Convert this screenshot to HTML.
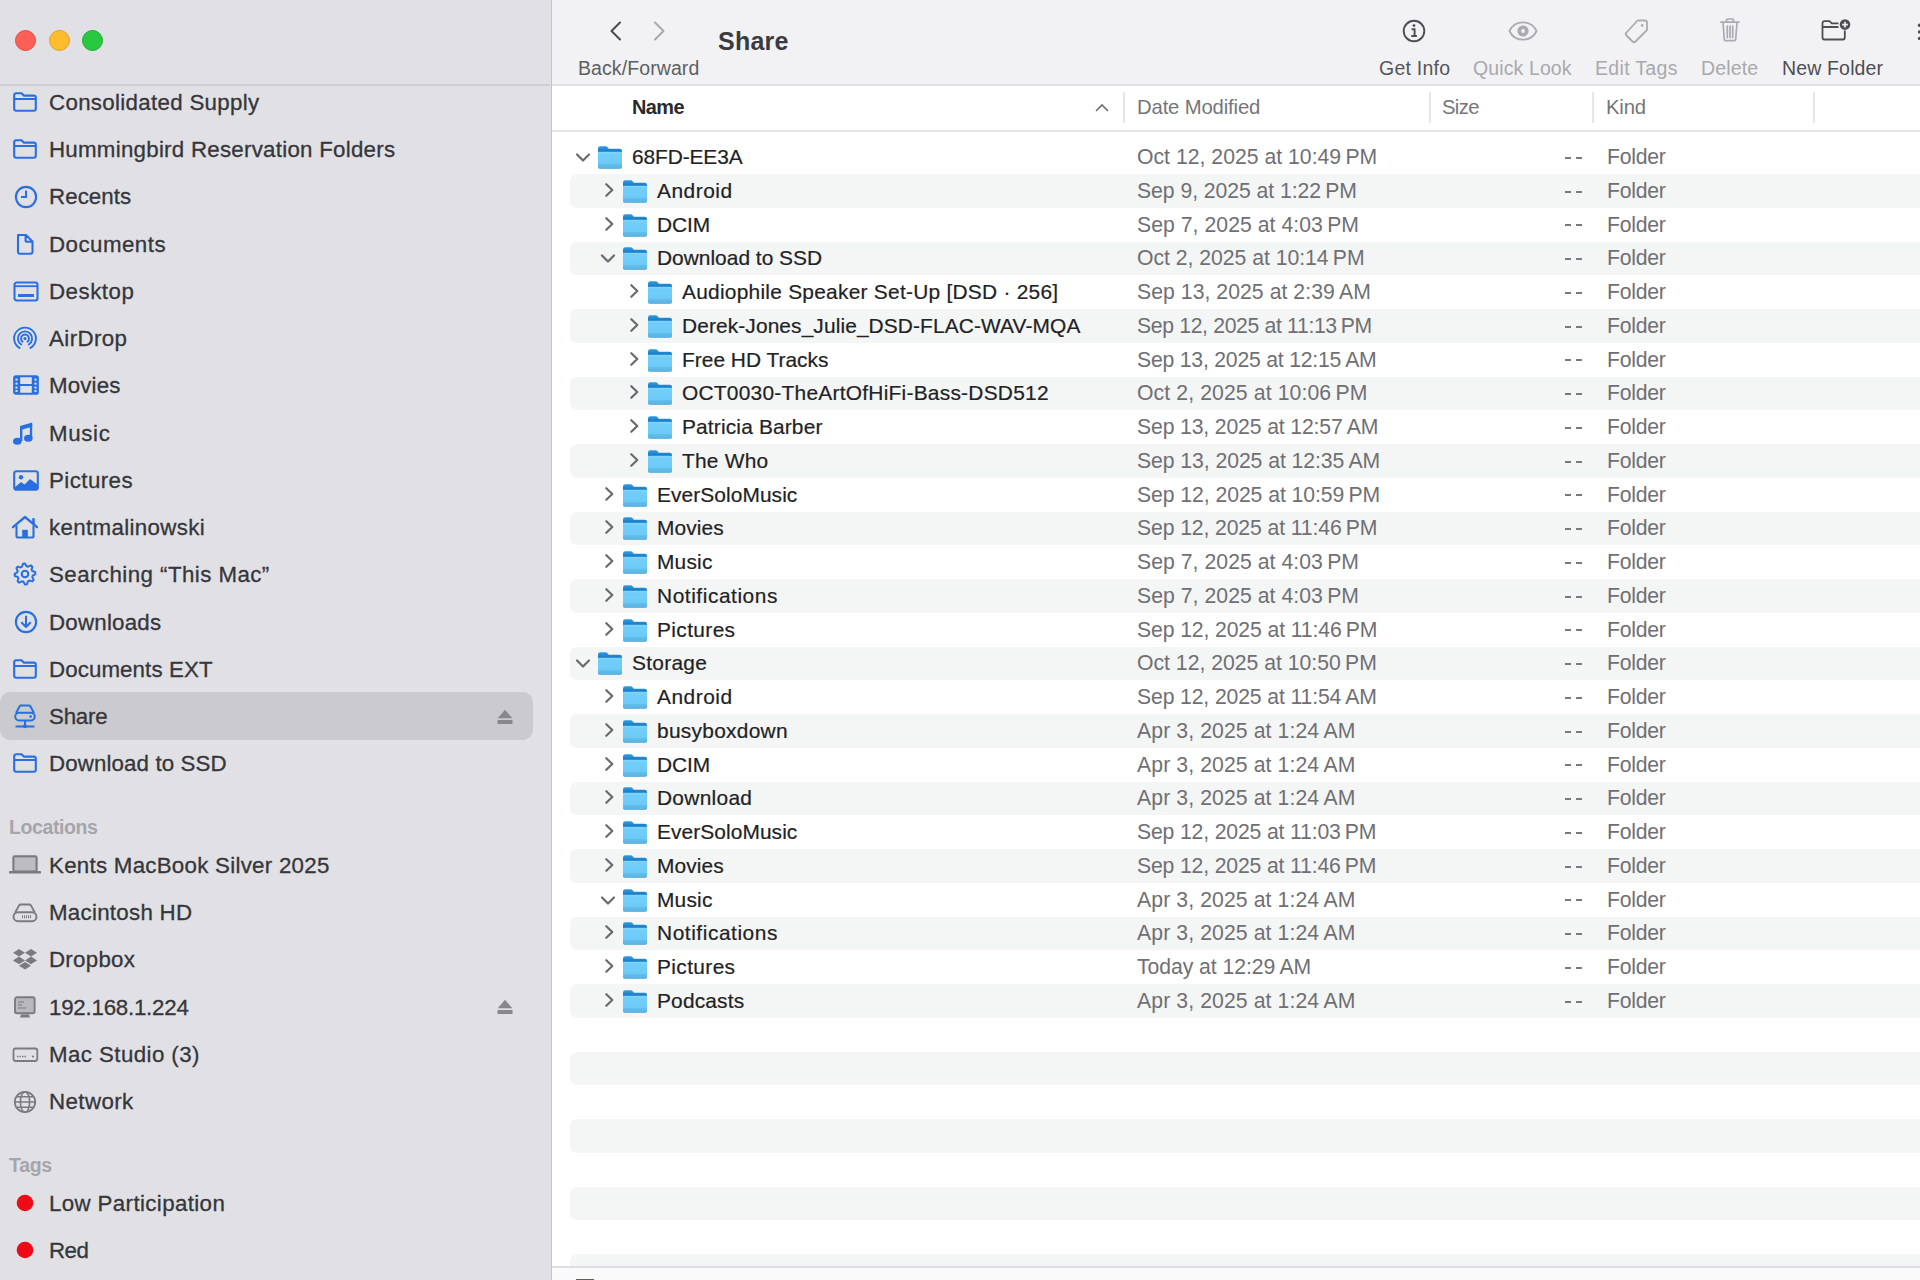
<!DOCTYPE html><html><head><meta charset="utf-8"><style>
*{margin:0;padding:0;box-sizing:border-box}
html,body{width:1920px;height:1280px;overflow:hidden;background:#fff;font-family:"Liberation Sans",sans-serif}
#sb{position:absolute;left:0;top:0;width:552px;height:1280px;background:#E1E1E5;border-right:1px solid #C4C4C8}
.tl{position:absolute;top:30px;width:21px;height:21px;border-radius:50%;border:0.5px solid}
#sbline{position:absolute;left:0;top:84px;width:550px;height:2px;background:#CFCFD3}
#sel{position:absolute;left:0;top:692px;width:533px;height:48px;border-radius:10px;background:#CBCBCF}
.si{position:absolute;left:49px;height:28px;line-height:28px;font-size:22.3px;color:#36363A;white-space:nowrap;-webkit-text-stroke:0.3px #36363A}
.sh{position:absolute;left:9px;height:28px;line-height:28px;font-size:19.5px;font-weight:bold;color:#A5A5AA;white-space:nowrap}
#tb{position:absolute;left:552px;top:0;width:1368px;height:84px;background:#F2F2F5}
#tb svg{margin-left:-552px}
#title{position:absolute;left:166px;top:26.5px;font-size:25px;font-weight:bold;color:#3B3B3F;white-space:nowrap}
.tlab{position:absolute;top:56px;margin-left:-552px;font-size:19.5px;white-space:nowrap;line-height:24px}
#tbline{position:absolute;left:552px;top:84px;width:1368px;height:2px;background:#E1E1E5}
#hdr{position:absolute;left:552px;top:86px;width:1368px;height:44px;background:#fff}
#hdr svg,#hdr div{margin-left:-552px}
.hn{position:absolute;left:632px;top:9px;font-size:19.9px;font-weight:bold;color:#2A2A2C;line-height:24px}
.hc{position:absolute;top:9px;font-size:20.3px;color:#75757A;line-height:24px}
.csep{position:absolute;top:6px;width:2px;height:31px;background:#E6E6E9}
#hdrline{position:absolute;left:552px;top:130px;width:1368px;height:2px;background:#E6E6E9}
#list{position:absolute;left:0;top:0;width:1920px;height:1267px;overflow:hidden;pointer-events:none}
.stripe{position:absolute;left:570px;width:1360px;height:33.4px;border-radius:7px;background:#F4F5F5}
.rn{position:absolute;font-size:20.9px;color:#222224;white-space:nowrap;line-height:26px;-webkit-text-stroke:0.2px #222224}
.rd{position:absolute;left:1137px;font-size:21.2px;color:#6F6F74;white-space:nowrap;line-height:26px}
.rs{position:absolute;left:1565px;width:6px;height:2.2px;background:#78787D;box-shadow:11px 0 0 #78787D}
.rk{position:absolute;left:1607px;font-size:21.2px;color:#6F6F74;white-space:nowrap;line-height:26px;letter-spacing:-0.25px}
#bot{position:absolute;left:552px;top:1266px;width:1368px;height:14px;background:#FAFAFA}
#bot div{margin-left:-552px}
#botline{position:absolute;left:552px;top:0;width:1368px;height:2px;background:#DEDEE0}
</style></head><body><div id="sb">
<div class="tl" style="left:15px;background:#FF5F57;border-color:#E5473F"></div>
<div class="tl" style="left:49px;background:#FEBC2E;border-color:#E0A024"></div>
<div class="tl" style="left:82px;background:#28C840;border-color:#1FAA33"></div>
<div id="sbline"></div>
<div id="sel"></div>
<svg style="position:absolute;left:12px;top:91px" width="26" height="22" viewBox="0 0 26 22"><path d="M2.2 4.2 Q2.2 2.2 4.2 2.2 H9.5 L11.8 4.6 H21.8 Q23.8 4.6 23.8 6.6 V17.8 Q23.8 19.8 21.8 19.8 H4.2 Q2.2 19.8 2.2 17.8 Z M2.2 8 H23.8" fill="none" stroke="#2A6FE0" stroke-width="2.1" stroke-linejoin="round"/></svg>
<div class="si" style="top:88.8px;letter-spacing:0.312px">Consolidated Supply</div>
<svg style="position:absolute;left:12px;top:138px" width="26" height="22" viewBox="0 0 26 22"><path d="M2.2 4.2 Q2.2 2.2 4.2 2.2 H9.5 L11.8 4.6 H21.8 Q23.8 4.6 23.8 6.6 V17.8 Q23.8 19.8 21.8 19.8 H4.2 Q2.2 19.8 2.2 17.8 Z M2.2 8 H23.8" fill="none" stroke="#2A6FE0" stroke-width="2.1" stroke-linejoin="round"/></svg>
<div class="si" style="top:135.8px;letter-spacing:0.260px">Hummingbird Reservation Folders</div>
<svg style="position:absolute;left:13.5px;top:185px" width="24" height="24" viewBox="0 0 24 24"><circle cx="12" cy="12" r="10.1" fill="none" stroke="#2A6FE0" stroke-width="2.1"/><path d="M12 5.5 V12 H7" fill="none" stroke="#2A6FE0" stroke-width="2"/></svg>
<div class="si" style="top:182.8px;letter-spacing:0.066px">Recents</div>
<svg style="position:absolute;left:13px;top:232px" width="24" height="24" viewBox="0 0 24 24"><path d="M5 3 H13 L19.5 9.5 V19.8 Q19.5 21.8 17.5 21.8 H7 Q5 21.8 5 19.8 V5 Q5 3 7 3 Z M12.6 3 V8.2 Q12.6 9.8 14.2 9.8 H19.5" fill="none" stroke="#2A6FE0" stroke-width="2.1" stroke-linejoin="round"/></svg>
<div class="si" style="top:230.8px;letter-spacing:0.473px">Documents</div>
<svg style="position:absolute;left:12.5px;top:281px" width="26" height="22" viewBox="0 0 26 22"><rect x="1.5" y="1.5" width="23" height="18" rx="2.2" fill="none" stroke="#2A6FE0" stroke-width="2.1"/><path d="M1.5 5.2 H24.5" stroke="#2A6FE0" stroke-width="1.8"/><rect x="5" y="13" width="16" height="3" fill="#2A6FE0"/></svg>
<div class="si" style="top:277.8px;letter-spacing:0.500px">Desktop</div>
<svg style="position:absolute;left:12.1px;top:325.75px" width="26" height="25" viewBox="0 0 26 25"><path d="M7.55 21.94 A10.9 10.9 0 1 1 18.45 21.94" fill="none" stroke="#2A6FE0" stroke-width="1.9" stroke-linecap="round"/><path d="M9.24 18.52 A7.1 7.1 0 1 1 16.76 18.52" fill="none" stroke="#2A6FE0" stroke-width="1.9" stroke-linecap="round"/><path d="M10.54 15.65 A4.0 4.0 0 1 1 15.46 15.65" fill="none" stroke="#2A6FE0" stroke-width="1.9" stroke-linecap="round"/><circle cx="13" cy="12.5" r="1.6" fill="#2A6FE0"/></svg>
<div class="si" style="top:324.8px;letter-spacing:0.401px">AirDrop</div>
<svg style="position:absolute;left:12.5px;top:375px" width="26" height="20" viewBox="0 0 26 20"><rect x="1.2" y="1.2" width="23.6" height="17.6" rx="1.6" fill="none" stroke="#2A6FE0" stroke-width="2.1"/><path d="M6.2 1.5 V18.5 M19.8 1.5 V18.5 M6.2 10 H19.8" stroke="#2A6FE0" stroke-width="2"/><g fill="#2A6FE0"><rect x="1" y="1" width="5" height="18"/><rect x="20" y="1" width="5" height="18"/></g><g fill="#E3E3E6"><rect x="2.5" y="3.6" width="2" height="2"/><rect x="2.5" y="7.6" width="2" height="2"/><rect x="2.5" y="11.6" width="2" height="2"/><rect x="2.5" y="15" width="2" height="2"/><rect x="21.5" y="3.6" width="2" height="2"/><rect x="21.5" y="7.6" width="2" height="2"/><rect x="21.5" y="11.6" width="2" height="2"/><rect x="21.5" y="15" width="2" height="2"/></g></svg>
<div class="si" style="top:371.8px;letter-spacing:0.160px">Movies</div>
<svg style="position:absolute;left:11.5px;top:421px" width="22" height="25" viewBox="0 0 22 25"><path d="M8 5 L20.2 1.6 V5.8 L10.4 8.6 V20 H8 Z" fill="#2A6FE0"/><path d="M17.8 3 H20.2 V17 H17.8 Z" fill="#2A6FE0"/><ellipse cx="5.3" cy="20.3" rx="4.3" ry="3.5" fill="#2A6FE0"/><ellipse cx="16.3" cy="17.3" rx="4.3" ry="3.5" fill="#2A6FE0"/></svg>
<div class="si" style="top:419.8px;letter-spacing:0.650px">Music</div>
<svg style="position:absolute;left:12.5px;top:470px" width="26" height="21" viewBox="0 0 26 21"><rect x="1.2" y="1.2" width="23.6" height="18.6" rx="2.2" fill="none" stroke="#2A6FE0" stroke-width="2.1"/><circle cx="8" cy="7.2" r="2.2" fill="#2A6FE0"/><path d="M1.5 17.5 L8 12 L11.5 14.5 L17 9 L24.5 14.5 V18 Q24.5 19.8 22.5 19.8 H3.5 Q1.5 19.8 1.5 18 Z" fill="#2A6FE0"/></svg>
<div class="si" style="top:466.8px;letter-spacing:0.429px">Pictures</div>
<svg style="position:absolute;left:10.5px;top:515px" width="28" height="24" viewBox="0 0 28 24"><path d="M2 12.2 L14 2 L26 12.2" fill="none" stroke="#2A6FE0" stroke-width="2.3" stroke-linecap="round" stroke-linejoin="round"/><path d="M5.5 10.5 V21.5 Q5.5 22.5 6.5 22.5 H21.5 Q22.5 22.5 22.5 21.5 V10.5" fill="none" stroke="#2A6FE0" stroke-width="2.1"/><rect x="21.2" y="3.2" width="2.6" height="6.8" fill="#2A6FE0"/><rect x="11.2" y="14.8" width="5.6" height="7.8" fill="#2A6FE0"/></svg>
<div class="si" style="top:513.8px;letter-spacing:0.353px">kentmalinowski</div>
<svg style="position:absolute;left:13px;top:562px" width="24" height="24" viewBox="0 0 24 24"><polygon points="12.00,1.60 14.03,1.80 15.02,4.70 16.39,5.43 19.35,4.65 20.65,6.22 19.30,8.98 19.75,10.46 22.40,12.00 22.20,14.03 19.30,15.02 18.57,16.39 19.35,19.35 17.78,20.65 15.02,19.30 13.54,19.75 12.00,22.40 9.97,22.20 8.98,19.30 7.61,18.57 4.65,19.35 3.35,17.78 4.70,15.02 4.25,13.54 1.60,12.00 1.80,9.97 4.70,8.98 5.43,7.61 4.65,4.65 6.22,3.35 8.98,4.70 10.46,4.25" fill="none" stroke="#2A6FE0" stroke-width="2" stroke-linejoin="round" transform="rotate(-11 12 12)"/><circle cx="12" cy="12" r="3.3" fill="none" stroke="#2A6FE0" stroke-width="2.1"/></svg>
<div class="si" style="top:560.8px;letter-spacing:0.442px">Searching “This Mac”</div>
<svg style="position:absolute;left:13.5px;top:610px" width="24" height="24" viewBox="0 0 24 24"><circle cx="12" cy="12" r="10.1" fill="none" stroke="#2A6FE0" stroke-width="2.1"/><path d="M12 6.5 V17 M7.8 12.8 L12 17 L16.2 12.8" fill="none" stroke="#2A6FE0" stroke-width="2" stroke-linecap="round" stroke-linejoin="round"/></svg>
<div class="si" style="top:608.8px;letter-spacing:0.223px">Downloads</div>
<svg style="position:absolute;left:12px;top:658px" width="26" height="22" viewBox="0 0 26 22"><path d="M2.2 4.2 Q2.2 2.2 4.2 2.2 H9.5 L11.8 4.6 H21.8 Q23.8 4.6 23.8 6.6 V17.8 Q23.8 19.8 21.8 19.8 H4.2 Q2.2 19.8 2.2 17.8 Z M2.2 8 H23.8" fill="none" stroke="#2A6FE0" stroke-width="2.1" stroke-linejoin="round"/></svg>
<div class="si" style="top:655.8px;letter-spacing:0.099px">Documents EXT</div>
<svg style="position:absolute;left:13px;top:704px" width="24" height="25" viewBox="0 0 24 25"><path d="M3 9 L6.5 2.5 Q7 1.6 8 1.6 H16 Q17 1.6 17.5 2.5 L21 9" fill="none" stroke="#2A6FE0" stroke-width="2"/><rect x="2.2" y="8.8" width="19.6" height="7.6" rx="3.8" fill="none" stroke="#2A6FE0" stroke-width="2"/><circle cx="17.6" cy="12.6" r="1.3" fill="#2A6FE0"/><path d="M12 16.4 V22 M2.5 22.4 H21.5" stroke="#2A6FE0" stroke-width="2"/><circle cx="12" cy="22.3" r="2" fill="#2A6FE0"/></svg>
<div class="si" style="top:702.8px;letter-spacing:-0.200px">Share</div>
<svg style="position:absolute;left:12px;top:752px" width="26" height="22" viewBox="0 0 26 22"><path d="M2.2 4.2 Q2.2 2.2 4.2 2.2 H9.5 L11.8 4.6 H21.8 Q23.8 4.6 23.8 6.6 V17.8 Q23.8 19.8 21.8 19.8 H4.2 Q2.2 19.8 2.2 17.8 Z M2.2 8 H23.8" fill="none" stroke="#2A6FE0" stroke-width="2.1" stroke-linejoin="round"/></svg>
<div class="si" style="top:749.8px;letter-spacing:0.115px">Download to SSD</div>
<svg style="position:absolute;left:8.5px;top:855px" width="32" height="20" viewBox="0 0 32 20"><rect x="4.2" y="1.2" width="23.6" height="15.4" rx="1.5" fill="#A2A2A6" stroke="#7A7A7F" stroke-width="1.7"/><rect x="6" y="3" width="20" height="12" fill="#BDBDC1"/><path d="M1 17.3 H31" stroke="#7A7A7F" stroke-width="2.6" stroke-linecap="round"/></svg>
<div class="si" style="top:851.8px;letter-spacing:0.266px">Kents MacBook Silver 2025</div>
<svg style="position:absolute;left:11.5px;top:903px" width="26" height="20" viewBox="0 0 26 20"><path d="M3.2 9.5 L7 2.5 Q7.6 1.5 8.6 1.5 H17.4 Q18.4 1.5 19 2.5 L22.8 9.5" fill="none" stroke="#7A7A7F" stroke-width="1.8"/><rect x="1.5" y="9.2" width="23" height="9" rx="4.5" fill="none" stroke="#7A7A7F" stroke-width="1.9"/><path d="M10 13.8 H20" stroke="#7A7A7F" stroke-width="3" stroke-dasharray="1 1"/></svg>
<div class="si" style="top:898.8px;letter-spacing:0.273px">Macintosh HD</div>
<svg style="position:absolute;left:11.5px;top:948px" width="26" height="22" viewBox="0 0 26 22"><g fill="#7A7A7F"><path d="M7 1 L13 4.8 L7 8.6 L1 4.8 Z"/><path d="M19 1 L25 4.8 L19 8.6 L13 4.8 Z"/><path d="M7 8.6 L13 12.4 L7 16.2 L1 12.4 Z"/><path d="M19 8.6 L25 12.4 L19 16.2 L13 12.4 Z"/><path d="M13 14 L19 17.8 L13 21.4 L7 17.8 Z"/></g></svg>
<div class="si" style="top:945.8px;letter-spacing:0.266px">Dropbox</div>
<svg style="position:absolute;left:12.5px;top:996px" width="24" height="23" viewBox="0 0 24 23"><rect x="2" y="1.3" width="19.6" height="16" rx="2" fill="#B9B9BD" stroke="#7A7A7F" stroke-width="1.9"/><path d="M5 6 H11 M5 9 H9 M5 12 H13" stroke="#7A7A7F" stroke-width="1.2"/><path d="M8 18.5 L7 21.5 H17 L16 18.5" fill="#7A7A7F"/></svg>
<div class="si" style="top:993.8px;letter-spacing:-0.233px">192.168.1.224</div>
<svg style="position:absolute;left:11.5px;top:1046.5px" width="28" height="16" viewBox="0 0 28 16"><rect x="1.5" y="1.5" width="23.8" height="12.5" rx="2.2" fill="none" stroke="#7A7A7F" stroke-width="1.8"/><path d="M5 9.5 H14" stroke="#7A7A7F" stroke-width="1.3" stroke-dasharray="1.5 1"/><circle cx="21" cy="9.5" r="1.1" fill="#7A7A7F"/></svg>
<div class="si" style="top:1040.8px;letter-spacing:0.416px">Mac Studio (3)</div>
<svg style="position:absolute;left:13px;top:1090px" width="24" height="24" viewBox="0 0 24 24"><circle cx="12" cy="12" r="10.2" fill="none" stroke="#7A7A7F" stroke-width="1.8"/><ellipse cx="12" cy="12" rx="4.6" ry="10.2" fill="none" stroke="#7A7A7F" stroke-width="1.6"/><path d="M2 12 H22 M3.5 6.8 H20.5 M3.5 17.2 H20.5" stroke="#7A7A7F" stroke-width="1.6"/></svg>
<div class="si" style="top:1087.8px;letter-spacing:0.400px">Network</div>
<svg style="position:absolute;left:16px;top:1194px" width="18" height="18" viewBox="0 0 18 18"><circle cx="9" cy="9" r="8.3" fill="#EC0B16"/></svg>
<div class="si" style="top:1189.8px;letter-spacing:0.375px">Low Participation</div>
<svg style="position:absolute;left:16px;top:1241px" width="18" height="18" viewBox="0 0 18 18"><circle cx="9" cy="9" r="8.3" fill="#EC0B16"/></svg>
<div class="si" style="top:1236.8px;letter-spacing:-0.500px">Red</div>
<div class="sh" style="top:813px;letter-spacing:-0.398px">Locations</div>
<div class="sh" style="top:1151px;letter-spacing:-0.334px">Tags</div>
<svg style="position:absolute;left:496px;top:708px" width="18" height="18" viewBox="0 0 18 18"><path d="M9 1.8 L16.3 10.3 H1.7 Z" fill="#88888C"/><rect x="1.5" y="12" width="15" height="4" rx="0.5" fill="#88888C"/></svg>
<svg style="position:absolute;left:496px;top:998px" width="18" height="18" viewBox="0 0 18 18"><path d="M9 1.8 L16.3 10.3 H1.7 Z" fill="#88888C"/><rect x="1.5" y="12" width="15" height="4" rx="0.5" fill="#88888C"/></svg>
</div>
<div id="tb">
<svg style="position:absolute;left:606.7px;top:20px" width="16" height="22" viewBox="0 0 16 22"><path d="M13 2.5 L4.5 11 L13 19.5" fill="none" stroke="#4A4A4E" stroke-width="2" stroke-linecap="round" stroke-linejoin="round"/></svg>
<svg style="position:absolute;left:651.3px;top:20px" width="16" height="22" viewBox="0 0 16 22"><path d="M4 2.5 L12.5 11 L4 19.5" fill="none" stroke="#A9A9AD" stroke-width="2" stroke-linecap="round" stroke-linejoin="round"/></svg>
<div id="title" style=";letter-spacing:0.250px">Share</div>
<div class="tlab" style="left:578px;color:#5E5E62;letter-spacing:0.091px">Back/Forward</div>
<svg style="position:absolute;left:1402px;top:19px" width="24" height="24" viewBox="0 0 24 24"><circle cx="12" cy="12" r="10.3" fill="none" stroke="#4E4E52" stroke-width="1.9"/><circle cx="12" cy="6.6" r="1.4" fill="#4E4E52"/><path d="M9.6 10.2 H12.6 V16.8 M9.3 17 H14.9" fill="none" stroke="#4E4E52" stroke-width="1.9"/></svg>
<div class="tlab" style="left:1379px;color:#55555A;letter-spacing:0.230px">Get Info</div>
<svg style="position:absolute;left:1508px;top:21px" width="30" height="20" viewBox="0 0 30 20"><path d="M1.4 10 C7 -1.6 23 -1.6 28.6 10 C23 21.6 7 21.6 1.4 10 Z" fill="none" stroke="#ABABAF" stroke-width="1.8"/><circle cx="15" cy="10" r="5.6" fill="#ABABAF"/><circle cx="15" cy="10" r="1.9" fill="#F2F2F5"/></svg>
<div class="tlab" style="left:1473px;color:#A9A9AD;letter-spacing:0.111px">Quick Look</div>
<svg style="position:absolute;left:1623px;top:17px" width="28" height="28" viewBox="0 0 28 28"><path d="M14.5 3.5 H22 Q24 3.5 24 5.5 V13 L12.5 24.5 Q11 26 9.5 24.5 L3.5 18.5 Q2 17 3.5 15.5 Z" fill="none" stroke="#ABABAF" stroke-width="1.8" stroke-linejoin="round" transform="rotate(0 14 14)"/><circle cx="19.2" cy="8.4" r="1.3" fill="#ABABAF"/></svg>
<div class="tlab" style="left:1595px;color:#A9A9AD;letter-spacing:0.325px">Edit Tags</div>
<svg style="position:absolute;left:1718px;top:17px" width="24" height="26" viewBox="0 0 24 26"><path d="M3 5.2 H21 M8.5 5 V3.2 Q8.5 2 9.7 2 H14.3 Q15.5 2 15.5 3.2 V5 M5 5.5 L6.3 22.5 Q6.4 23.6 7.5 23.6 H16.5 Q17.6 23.6 17.7 22.5 L19 5.5 M9.3 9 V20.5 M12 9 V20.5 M14.7 9 V20.5" fill="none" stroke="#ABABAF" stroke-width="1.7" stroke-linecap="round"/></svg>
<div class="tlab" style="left:1701px;color:#A9A9AD;letter-spacing:0.160px">Delete</div>
<svg style="position:absolute;left:1819px;top:16px" width="34" height="26" viewBox="0 0 34 26"><path d="M3.5 7.2 Q3.5 5.2 5.5 5.2 H10.5 L12.8 7.4 H19.5 M3.5 11 H19.5 M3.5 7.2 V21.5 Q3.5 23.5 5.5 23.5 H23.8 Q25.8 23.5 25.8 21.5 V14.5" fill="none" stroke="#4E4E52" stroke-width="1.8" stroke-linejoin="round"/><circle cx="26" cy="8.6" r="5.3" fill="#4E4E52"/><path d="M26 5.8 V11.4 M23.2 8.6 H28.8" stroke="#F2F2F5" stroke-width="1.6"/></svg>
<div class="tlab" style="left:1782px;color:#4E4E52;letter-spacing:0.157px">New Folder</div>
<svg style="position:absolute;left:1910px;top:22px" width="10" height="20" viewBox="0 0 10 20"><circle cx="9.5" cy="3.3" r="1.7" fill="#4E4E52"/><circle cx="9.5" cy="9.9" r="1.7" fill="#4E4E52"/><circle cx="9.5" cy="16.4" r="1.7" fill="#4E4E52"/></svg>
</div>
<div id="tbline"></div>
<div id="hdr">
<div class="hn" style=";letter-spacing:-0.533px">Name</div>
<svg style="position:absolute;left:1094px;top:14px" width="16" height="14" viewBox="0 0 16 14"><path d="M2.5 10.5 L8 5 L13.5 10.5" fill="none" stroke="#707074" stroke-width="1.7" stroke-linecap="round"/></svg>
<div class="csep" style="left:1123px"></div>
<div class="csep" style="left:1429px"></div>
<div class="csep" style="left:1592px"></div>
<div class="csep" style="left:1813px"></div>
<div class="hc" style="left:1137px;letter-spacing:-0.150px">Date Modified</div>
<div class="hc" style="left:1442px;letter-spacing:-0.666px">Size</div>
<div class="hc" style="left:1606px;letter-spacing:-0.199px">Kind</div>
</div>
<div id="hdrline"></div>
<svg width="0" height="0" style="position:absolute"><defs><linearGradient id="fg" x1="0" y1="0" x2="0" y2="1"><stop offset="0" stop-color="#84D7FB"/><stop offset="0.15" stop-color="#72CEF9"/><stop offset="0.7" stop-color="#6DCAF7"/><stop offset="0.75" stop-color="#62BEEC"/><stop offset="1" stop-color="#5AB3E0"/></linearGradient><linearGradient id="fb" x1="0" y1="0" x2="0" y2="1"><stop offset="0" stop-color="#2F9CE2"/><stop offset="0.25" stop-color="#1878C4"/><stop offset="1" stop-color="#1878C4"/></linearGradient></defs></svg>
<div id="list">
<div class="stripe" style="top:174.2px"></div>
<div class="stripe" style="top:241.7px"></div>
<div class="stripe" style="top:309.2px"></div>
<div class="stripe" style="top:376.7px"></div>
<div class="stripe" style="top:444.2px"></div>
<div class="stripe" style="top:511.7px"></div>
<div class="stripe" style="top:579.2px"></div>
<div class="stripe" style="top:646.7px"></div>
<div class="stripe" style="top:714.2px"></div>
<div class="stripe" style="top:781.7px"></div>
<div class="stripe" style="top:849.2px"></div>
<div class="stripe" style="top:916.7px"></div>
<div class="stripe" style="top:984.2px"></div>
<div class="stripe" style="top:1051.7px"></div>
<div class="stripe" style="top:1119.2px"></div>
<div class="stripe" style="top:1186.7px"></div>
<div class="stripe" style="top:1254.2px"></div>
<svg style="position:absolute;left:574px;top:151px" width="18" height="14" viewBox="0 0 18 14"><path d="M3 3.5 L9 9.5 L15 3.5" fill="none" stroke="#6A6A6E" stroke-width="2.2" stroke-linecap="round" stroke-linejoin="round"/></svg>
<svg style="position:absolute;left:597px;top:145px" width="26" height="25" viewBox="0 0 26 25"><path d="M1 3.5 Q1 1.2 3.3 1.2 H8.6 Q9.8 1.2 10.6 2.2 L11.8 3.7 H22.8 Q25 3.7 25 5.9 V21.4 Q25 23.6 22.8 23.6 H3.2 Q1 23.6 1 21.4 Z" fill="url(#fb)"/><path d="M1 7.2 Q1 6.7 1.5 6.7 H24.5 Q25 6.7 25 7.2 V21.4 Q25 23.6 22.8 23.6 H3.2 Q1 23.6 1 21.4 Z" fill="url(#fg)"/></svg>
<div class="rn" style="left:632px;top:144.1px;letter-spacing:-0.100px">68FD-EE3A</div>
<div class="rd" style="top:144.1px;letter-spacing:0.018px">Oct 12, 2025 at 10:49 PM</div>
<div class="rs" style="top:156.8px"></div>
<div class="rk" style="top:144.1px">Folder</div>
<svg style="position:absolute;left:601px;top:181px" width="14" height="18" viewBox="0 0 14 18"><path d="M5.3 3.2 L11.3 9 L5.3 14.8" fill="none" stroke="#6A6A6E" stroke-width="2.2" stroke-linecap="round" stroke-linejoin="round"/></svg>
<svg style="position:absolute;left:622px;top:179px" width="26" height="25" viewBox="0 0 26 25"><path d="M1 3.5 Q1 1.2 3.3 1.2 H8.6 Q9.8 1.2 10.6 2.2 L11.8 3.7 H22.8 Q25 3.7 25 5.9 V21.4 Q25 23.6 22.8 23.6 H3.2 Q1 23.6 1 21.4 Z" fill="url(#fb)"/><path d="M1 7.2 Q1 6.7 1.5 6.7 H24.5 Q25 6.7 25 7.2 V21.4 Q25 23.6 22.8 23.6 H3.2 Q1 23.6 1 21.4 Z" fill="url(#fg)"/></svg>
<div class="rn" style="left:657px;top:177.9px;letter-spacing:0.500px">Android</div>
<div class="rd" style="top:177.9px;letter-spacing:-0.048px">Sep 9, 2025 at 1:22 PM</div>
<div class="rs" style="top:190.6px"></div>
<div class="rk" style="top:177.9px">Folder</div>
<svg style="position:absolute;left:601px;top:215px" width="14" height="18" viewBox="0 0 14 18"><path d="M5.3 3.2 L11.3 9 L5.3 14.8" fill="none" stroke="#6A6A6E" stroke-width="2.2" stroke-linecap="round" stroke-linejoin="round"/></svg>
<svg style="position:absolute;left:622px;top:213px" width="26" height="25" viewBox="0 0 26 25"><path d="M1 3.5 Q1 1.2 3.3 1.2 H8.6 Q9.8 1.2 10.6 2.2 L11.8 3.7 H22.8 Q25 3.7 25 5.9 V21.4 Q25 23.6 22.8 23.6 H3.2 Q1 23.6 1 21.4 Z" fill="url(#fb)"/><path d="M1 7.2 Q1 6.7 1.5 6.7 H24.5 Q25 6.7 25 7.2 V21.4 Q25 23.6 22.8 23.6 H3.2 Q1 23.6 1 21.4 Z" fill="url(#fg)"/></svg>
<div class="rn" style="left:657px;top:211.6px;letter-spacing:-0.067px">DCIM</div>
<div class="rd" style="top:211.6px;letter-spacing:0.048px">Sep 7, 2025 at 4:03 PM</div>
<div class="rs" style="top:224.3px"></div>
<div class="rk" style="top:211.6px">Folder</div>
<svg style="position:absolute;left:599px;top:252px" width="18" height="14" viewBox="0 0 18 14"><path d="M3 3.5 L9 9.5 L15 3.5" fill="none" stroke="#6A6A6E" stroke-width="2.2" stroke-linecap="round" stroke-linejoin="round"/></svg>
<svg style="position:absolute;left:622px;top:246px" width="26" height="25" viewBox="0 0 26 25"><path d="M1 3.5 Q1 1.2 3.3 1.2 H8.6 Q9.8 1.2 10.6 2.2 L11.8 3.7 H22.8 Q25 3.7 25 5.9 V21.4 Q25 23.6 22.8 23.6 H3.2 Q1 23.6 1 21.4 Z" fill="url(#fb)"/><path d="M1 7.2 Q1 6.7 1.5 6.7 H24.5 Q25 6.7 25 7.2 V21.4 Q25 23.6 22.8 23.6 H3.2 Q1 23.6 1 21.4 Z" fill="url(#fg)"/></svg>
<div class="rn" style="left:657px;top:245.4px;letter-spacing:0.014px">Download to SSD</div>
<div class="rd" style="top:245.4px;letter-spacing:-0.020px">Oct 2, 2025 at 10:14 PM</div>
<div class="rs" style="top:258.1px"></div>
<div class="rk" style="top:245.4px">Folder</div>
<svg style="position:absolute;left:626px;top:282px" width="14" height="18" viewBox="0 0 14 18"><path d="M5.3 3.2 L11.3 9 L5.3 14.8" fill="none" stroke="#6A6A6E" stroke-width="2.2" stroke-linecap="round" stroke-linejoin="round"/></svg>
<svg style="position:absolute;left:647px;top:280px" width="26" height="25" viewBox="0 0 26 25"><path d="M1 3.5 Q1 1.2 3.3 1.2 H8.6 Q9.8 1.2 10.6 2.2 L11.8 3.7 H22.8 Q25 3.7 25 5.9 V21.4 Q25 23.6 22.8 23.6 H3.2 Q1 23.6 1 21.4 Z" fill="url(#fb)"/><path d="M1 7.2 Q1 6.7 1.5 6.7 H24.5 Q25 6.7 25 7.2 V21.4 Q25 23.6 22.8 23.6 H3.2 Q1 23.6 1 21.4 Z" fill="url(#fg)"/></svg>
<div class="rn" style="left:682px;top:279.1px;letter-spacing:0.255px">Audiophile Speaker Set-Up [DSD · 256]</div>
<div class="rd" style="top:279.1px;letter-spacing:0.054px">Sep 13, 2025 at 2:39 AM</div>
<div class="rs" style="top:291.8px"></div>
<div class="rk" style="top:279.1px">Folder</div>
<svg style="position:absolute;left:626px;top:316px" width="14" height="18" viewBox="0 0 14 18"><path d="M5.3 3.2 L11.3 9 L5.3 14.8" fill="none" stroke="#6A6A6E" stroke-width="2.2" stroke-linecap="round" stroke-linejoin="round"/></svg>
<svg style="position:absolute;left:647px;top:314px" width="26" height="25" viewBox="0 0 26 25"><path d="M1 3.5 Q1 1.2 3.3 1.2 H8.6 Q9.8 1.2 10.6 2.2 L11.8 3.7 H22.8 Q25 3.7 25 5.9 V21.4 Q25 23.6 22.8 23.6 H3.2 Q1 23.6 1 21.4 Z" fill="url(#fb)"/><path d="M1 7.2 Q1 6.7 1.5 6.7 H24.5 Q25 6.7 25 7.2 V21.4 Q25 23.6 22.8 23.6 H3.2 Q1 23.6 1 21.4 Z" fill="url(#fg)"/></svg>
<div class="rn" style="left:682px;top:312.9px;letter-spacing:0.110px">Derek-Jones_Julie_DSD-FLAC-WAV-MQA</div>
<div class="rd" style="top:312.9px;letter-spacing:-0.340px">Sep 12, 2025 at 11:13 PM</div>
<div class="rs" style="top:325.6px"></div>
<div class="rk" style="top:312.9px">Folder</div>
<svg style="position:absolute;left:626px;top:350px" width="14" height="18" viewBox="0 0 14 18"><path d="M5.3 3.2 L11.3 9 L5.3 14.8" fill="none" stroke="#6A6A6E" stroke-width="2.2" stroke-linecap="round" stroke-linejoin="round"/></svg>
<svg style="position:absolute;left:647px;top:348px" width="26" height="25" viewBox="0 0 26 25"><path d="M1 3.5 Q1 1.2 3.3 1.2 H8.6 Q9.8 1.2 10.6 2.2 L11.8 3.7 H22.8 Q25 3.7 25 5.9 V21.4 Q25 23.6 22.8 23.6 H3.2 Q1 23.6 1 21.4 Z" fill="url(#fb)"/><path d="M1 7.2 Q1 6.7 1.5 6.7 H24.5 Q25 6.7 25 7.2 V21.4 Q25 23.6 22.8 23.6 H3.2 Q1 23.6 1 21.4 Z" fill="url(#fg)"/></svg>
<div class="rn" style="left:682px;top:346.6px;letter-spacing:0.015px">Free HD Tracks</div>
<div class="rd" style="top:346.6px;letter-spacing:-0.209px">Sep 13, 2025 at 12:15 AM</div>
<div class="rs" style="top:359.3px"></div>
<div class="rk" style="top:346.6px">Folder</div>
<svg style="position:absolute;left:626px;top:383px" width="14" height="18" viewBox="0 0 14 18"><path d="M5.3 3.2 L11.3 9 L5.3 14.8" fill="none" stroke="#6A6A6E" stroke-width="2.2" stroke-linecap="round" stroke-linejoin="round"/></svg>
<svg style="position:absolute;left:647px;top:381px" width="26" height="25" viewBox="0 0 26 25"><path d="M1 3.5 Q1 1.2 3.3 1.2 H8.6 Q9.8 1.2 10.6 2.2 L11.8 3.7 H22.8 Q25 3.7 25 5.9 V21.4 Q25 23.6 22.8 23.6 H3.2 Q1 23.6 1 21.4 Z" fill="url(#fb)"/><path d="M1 7.2 Q1 6.7 1.5 6.7 H24.5 Q25 6.7 25 7.2 V21.4 Q25 23.6 22.8 23.6 H3.2 Q1 23.6 1 21.4 Z" fill="url(#fg)"/></svg>
<div class="rn" style="left:682px;top:380.4px;letter-spacing:0.252px">OCT0030-TheArtOfHiFi-Bass-DSD512</div>
<div class="rd" style="top:380.4px;letter-spacing:0.110px">Oct 2, 2025 at 10:06 PM</div>
<div class="rs" style="top:393.1px"></div>
<div class="rk" style="top:380.4px">Folder</div>
<svg style="position:absolute;left:626px;top:417px" width="14" height="18" viewBox="0 0 14 18"><path d="M5.3 3.2 L11.3 9 L5.3 14.8" fill="none" stroke="#6A6A6E" stroke-width="2.2" stroke-linecap="round" stroke-linejoin="round"/></svg>
<svg style="position:absolute;left:647px;top:415px" width="26" height="25" viewBox="0 0 26 25"><path d="M1 3.5 Q1 1.2 3.3 1.2 H8.6 Q9.8 1.2 10.6 2.2 L11.8 3.7 H22.8 Q25 3.7 25 5.9 V21.4 Q25 23.6 22.8 23.6 H3.2 Q1 23.6 1 21.4 Z" fill="url(#fb)"/><path d="M1 7.2 Q1 6.7 1.5 6.7 H24.5 Q25 6.7 25 7.2 V21.4 Q25 23.6 22.8 23.6 H3.2 Q1 23.6 1 21.4 Z" fill="url(#fg)"/></svg>
<div class="rn" style="left:682px;top:414.1px;letter-spacing:0.158px">Patricia Barber</div>
<div class="rd" style="top:414.1px;letter-spacing:-0.139px">Sep 13, 2025 at 12:57 AM</div>
<div class="rs" style="top:426.8px"></div>
<div class="rk" style="top:414.1px">Folder</div>
<svg style="position:absolute;left:626px;top:451px" width="14" height="18" viewBox="0 0 14 18"><path d="M5.3 3.2 L11.3 9 L5.3 14.8" fill="none" stroke="#6A6A6E" stroke-width="2.2" stroke-linecap="round" stroke-linejoin="round"/></svg>
<svg style="position:absolute;left:647px;top:449px" width="26" height="25" viewBox="0 0 26 25"><path d="M1 3.5 Q1 1.2 3.3 1.2 H8.6 Q9.8 1.2 10.6 2.2 L11.8 3.7 H22.8 Q25 3.7 25 5.9 V21.4 Q25 23.6 22.8 23.6 H3.2 Q1 23.6 1 21.4 Z" fill="url(#fb)"/><path d="M1 7.2 Q1 6.7 1.5 6.7 H24.5 Q25 6.7 25 7.2 V21.4 Q25 23.6 22.8 23.6 H3.2 Q1 23.6 1 21.4 Z" fill="url(#fg)"/></svg>
<div class="rn" style="left:682px;top:447.9px;letter-spacing:0.234px">The Who</div>
<div class="rd" style="top:447.9px;letter-spacing:-0.060px">Sep 13, 2025 at 12:35 AM</div>
<div class="rs" style="top:460.6px"></div>
<div class="rk" style="top:447.9px">Folder</div>
<svg style="position:absolute;left:601px;top:485px" width="14" height="18" viewBox="0 0 14 18"><path d="M5.3 3.2 L11.3 9 L5.3 14.8" fill="none" stroke="#6A6A6E" stroke-width="2.2" stroke-linecap="round" stroke-linejoin="round"/></svg>
<svg style="position:absolute;left:622px;top:483px" width="26" height="25" viewBox="0 0 26 25"><path d="M1 3.5 Q1 1.2 3.3 1.2 H8.6 Q9.8 1.2 10.6 2.2 L11.8 3.7 H22.8 Q25 3.7 25 5.9 V21.4 Q25 23.6 22.8 23.6 H3.2 Q1 23.6 1 21.4 Z" fill="url(#fb)"/><path d="M1 7.2 Q1 6.7 1.5 6.7 H24.5 Q25 6.7 25 7.2 V21.4 Q25 23.6 22.8 23.6 H3.2 Q1 23.6 1 21.4 Z" fill="url(#fg)"/></svg>
<div class="rn" style="left:657px;top:481.6px;letter-spacing:0.083px">EverSoloMusic</div>
<div class="rd" style="top:481.6px;letter-spacing:-0.060px">Sep 12, 2025 at 10:59 PM</div>
<div class="rs" style="top:494.3px"></div>
<div class="rk" style="top:481.6px">Folder</div>
<svg style="position:absolute;left:601px;top:518px" width="14" height="18" viewBox="0 0 14 18"><path d="M5.3 3.2 L11.3 9 L5.3 14.8" fill="none" stroke="#6A6A6E" stroke-width="2.2" stroke-linecap="round" stroke-linejoin="round"/></svg>
<svg style="position:absolute;left:622px;top:516px" width="26" height="25" viewBox="0 0 26 25"><path d="M1 3.5 Q1 1.2 3.3 1.2 H8.6 Q9.8 1.2 10.6 2.2 L11.8 3.7 H22.8 Q25 3.7 25 5.9 V21.4 Q25 23.6 22.8 23.6 H3.2 Q1 23.6 1 21.4 Z" fill="url(#fb)"/><path d="M1 7.2 Q1 6.7 1.5 6.7 H24.5 Q25 6.7 25 7.2 V21.4 Q25 23.6 22.8 23.6 H3.2 Q1 23.6 1 21.4 Z" fill="url(#fg)"/></svg>
<div class="rn" style="left:657px;top:515.4px;letter-spacing:0.120px">Movies</div>
<div class="rd" style="top:515.4px;letter-spacing:-0.112px">Sep 12, 2025 at 11:46 PM</div>
<div class="rs" style="top:528.1px"></div>
<div class="rk" style="top:515.4px">Folder</div>
<svg style="position:absolute;left:601px;top:552px" width="14" height="18" viewBox="0 0 14 18"><path d="M5.3 3.2 L11.3 9 L5.3 14.8" fill="none" stroke="#6A6A6E" stroke-width="2.2" stroke-linecap="round" stroke-linejoin="round"/></svg>
<svg style="position:absolute;left:622px;top:550px" width="26" height="25" viewBox="0 0 26 25"><path d="M1 3.5 Q1 1.2 3.3 1.2 H8.6 Q9.8 1.2 10.6 2.2 L11.8 3.7 H22.8 Q25 3.7 25 5.9 V21.4 Q25 23.6 22.8 23.6 H3.2 Q1 23.6 1 21.4 Z" fill="url(#fb)"/><path d="M1 7.2 Q1 6.7 1.5 6.7 H24.5 Q25 6.7 25 7.2 V21.4 Q25 23.6 22.8 23.6 H3.2 Q1 23.6 1 21.4 Z" fill="url(#fg)"/></svg>
<div class="rn" style="left:657px;top:549.1px;letter-spacing:0.200px">Music</div>
<div class="rd" style="top:549.1px;letter-spacing:0.048px">Sep 7, 2025 at 4:03 PM</div>
<div class="rs" style="top:561.8px"></div>
<div class="rk" style="top:549.1px">Folder</div>
<svg style="position:absolute;left:601px;top:586px" width="14" height="18" viewBox="0 0 14 18"><path d="M5.3 3.2 L11.3 9 L5.3 14.8" fill="none" stroke="#6A6A6E" stroke-width="2.2" stroke-linecap="round" stroke-linejoin="round"/></svg>
<svg style="position:absolute;left:622px;top:584px" width="26" height="25" viewBox="0 0 26 25"><path d="M1 3.5 Q1 1.2 3.3 1.2 H8.6 Q9.8 1.2 10.6 2.2 L11.8 3.7 H22.8 Q25 3.7 25 5.9 V21.4 Q25 23.6 22.8 23.6 H3.2 Q1 23.6 1 21.4 Z" fill="url(#fb)"/><path d="M1 7.2 Q1 6.7 1.5 6.7 H24.5 Q25 6.7 25 7.2 V21.4 Q25 23.6 22.8 23.6 H3.2 Q1 23.6 1 21.4 Z" fill="url(#fg)"/></svg>
<div class="rn" style="left:657px;top:582.9px;letter-spacing:0.550px">Notifications</div>
<div class="rd" style="top:582.9px;letter-spacing:0.048px">Sep 7, 2025 at 4:03 PM</div>
<div class="rs" style="top:595.6px"></div>
<div class="rk" style="top:582.9px">Folder</div>
<svg style="position:absolute;left:601px;top:620px" width="14" height="18" viewBox="0 0 14 18"><path d="M5.3 3.2 L11.3 9 L5.3 14.8" fill="none" stroke="#6A6A6E" stroke-width="2.2" stroke-linecap="round" stroke-linejoin="round"/></svg>
<svg style="position:absolute;left:622px;top:618px" width="26" height="25" viewBox="0 0 26 25"><path d="M1 3.5 Q1 1.2 3.3 1.2 H8.6 Q9.8 1.2 10.6 2.2 L11.8 3.7 H22.8 Q25 3.7 25 5.9 V21.4 Q25 23.6 22.8 23.6 H3.2 Q1 23.6 1 21.4 Z" fill="url(#fb)"/><path d="M1 7.2 Q1 6.7 1.5 6.7 H24.5 Q25 6.7 25 7.2 V21.4 Q25 23.6 22.8 23.6 H3.2 Q1 23.6 1 21.4 Z" fill="url(#fg)"/></svg>
<div class="rn" style="left:657px;top:616.6px;letter-spacing:0.371px">Pictures</div>
<div class="rd" style="top:616.6px;letter-spacing:-0.112px">Sep 12, 2025 at 11:46 PM</div>
<div class="rs" style="top:629.3px"></div>
<div class="rk" style="top:616.6px">Folder</div>
<svg style="position:absolute;left:574px;top:657px" width="18" height="14" viewBox="0 0 18 14"><path d="M3 3.5 L9 9.5 L15 3.5" fill="none" stroke="#6A6A6E" stroke-width="2.2" stroke-linecap="round" stroke-linejoin="round"/></svg>
<svg style="position:absolute;left:597px;top:651px" width="26" height="25" viewBox="0 0 26 25"><path d="M1 3.5 Q1 1.2 3.3 1.2 H8.6 Q9.8 1.2 10.6 2.2 L11.8 3.7 H22.8 Q25 3.7 25 5.9 V21.4 Q25 23.6 22.8 23.6 H3.2 Q1 23.6 1 21.4 Z" fill="url(#fb)"/><path d="M1 7.2 Q1 6.7 1.5 6.7 H24.5 Q25 6.7 25 7.2 V21.4 Q25 23.6 22.8 23.6 H3.2 Q1 23.6 1 21.4 Z" fill="url(#fg)"/></svg>
<div class="rn" style="left:632px;top:650.4px;letter-spacing:0.266px">Storage</div>
<div class="rd" style="top:650.4px">Oct 12, 2025 at 10:50 PM</div>
<div class="rs" style="top:663.1px"></div>
<div class="rk" style="top:650.4px">Folder</div>
<svg style="position:absolute;left:601px;top:687px" width="14" height="18" viewBox="0 0 14 18"><path d="M5.3 3.2 L11.3 9 L5.3 14.8" fill="none" stroke="#6A6A6E" stroke-width="2.2" stroke-linecap="round" stroke-linejoin="round"/></svg>
<svg style="position:absolute;left:622px;top:685px" width="26" height="25" viewBox="0 0 26 25"><path d="M1 3.5 Q1 1.2 3.3 1.2 H8.6 Q9.8 1.2 10.6 2.2 L11.8 3.7 H22.8 Q25 3.7 25 5.9 V21.4 Q25 23.6 22.8 23.6 H3.2 Q1 23.6 1 21.4 Z" fill="url(#fb)"/><path d="M1 7.2 Q1 6.7 1.5 6.7 H24.5 Q25 6.7 25 7.2 V21.4 Q25 23.6 22.8 23.6 H3.2 Q1 23.6 1 21.4 Z" fill="url(#fg)"/></svg>
<div class="rn" style="left:657px;top:684.1px;letter-spacing:0.500px">Android</div>
<div class="rd" style="top:684.1px;letter-spacing:-0.131px">Sep 12, 2025 at 11:54 AM</div>
<div class="rs" style="top:696.8px"></div>
<div class="rk" style="top:684.1px">Folder</div>
<svg style="position:absolute;left:601px;top:721px" width="14" height="18" viewBox="0 0 14 18"><path d="M5.3 3.2 L11.3 9 L5.3 14.8" fill="none" stroke="#6A6A6E" stroke-width="2.2" stroke-linecap="round" stroke-linejoin="round"/></svg>
<svg style="position:absolute;left:622px;top:719px" width="26" height="25" viewBox="0 0 26 25"><path d="M1 3.5 Q1 1.2 3.3 1.2 H8.6 Q9.8 1.2 10.6 2.2 L11.8 3.7 H22.8 Q25 3.7 25 5.9 V21.4 Q25 23.6 22.8 23.6 H3.2 Q1 23.6 1 21.4 Z" fill="url(#fb)"/><path d="M1 7.2 Q1 6.7 1.5 6.7 H24.5 Q25 6.7 25 7.2 V21.4 Q25 23.6 22.8 23.6 H3.2 Q1 23.6 1 21.4 Z" fill="url(#fg)"/></svg>
<div class="rn" style="left:657px;top:717.9px;letter-spacing:0.280px">busyboxdown</div>
<div class="rd" style="top:717.9px;letter-spacing:0.105px">Apr 3, 2025 at 1:24 AM</div>
<div class="rs" style="top:730.6px"></div>
<div class="rk" style="top:717.9px">Folder</div>
<svg style="position:absolute;left:601px;top:755px" width="14" height="18" viewBox="0 0 14 18"><path d="M5.3 3.2 L11.3 9 L5.3 14.8" fill="none" stroke="#6A6A6E" stroke-width="2.2" stroke-linecap="round" stroke-linejoin="round"/></svg>
<svg style="position:absolute;left:622px;top:753px" width="26" height="25" viewBox="0 0 26 25"><path d="M1 3.5 Q1 1.2 3.3 1.2 H8.6 Q9.8 1.2 10.6 2.2 L11.8 3.7 H22.8 Q25 3.7 25 5.9 V21.4 Q25 23.6 22.8 23.6 H3.2 Q1 23.6 1 21.4 Z" fill="url(#fb)"/><path d="M1 7.2 Q1 6.7 1.5 6.7 H24.5 Q25 6.7 25 7.2 V21.4 Q25 23.6 22.8 23.6 H3.2 Q1 23.6 1 21.4 Z" fill="url(#fg)"/></svg>
<div class="rn" style="left:657px;top:751.6px;letter-spacing:-0.067px">DCIM</div>
<div class="rd" style="top:751.6px;letter-spacing:0.105px">Apr 3, 2025 at 1:24 AM</div>
<div class="rs" style="top:764.3px"></div>
<div class="rk" style="top:751.6px">Folder</div>
<svg style="position:absolute;left:601px;top:788px" width="14" height="18" viewBox="0 0 14 18"><path d="M5.3 3.2 L11.3 9 L5.3 14.8" fill="none" stroke="#6A6A6E" stroke-width="2.2" stroke-linecap="round" stroke-linejoin="round"/></svg>
<svg style="position:absolute;left:622px;top:786px" width="26" height="25" viewBox="0 0 26 25"><path d="M1 3.5 Q1 1.2 3.3 1.2 H8.6 Q9.8 1.2 10.6 2.2 L11.8 3.7 H22.8 Q25 3.7 25 5.9 V21.4 Q25 23.6 22.8 23.6 H3.2 Q1 23.6 1 21.4 Z" fill="url(#fb)"/><path d="M1 7.2 Q1 6.7 1.5 6.7 H24.5 Q25 6.7 25 7.2 V21.4 Q25 23.6 22.8 23.6 H3.2 Q1 23.6 1 21.4 Z" fill="url(#fg)"/></svg>
<div class="rn" style="left:657px;top:785.4px;letter-spacing:0.285px">Download</div>
<div class="rd" style="top:785.4px;letter-spacing:0.105px">Apr 3, 2025 at 1:24 AM</div>
<div class="rs" style="top:798.1px"></div>
<div class="rk" style="top:785.4px">Folder</div>
<svg style="position:absolute;left:601px;top:822px" width="14" height="18" viewBox="0 0 14 18"><path d="M5.3 3.2 L11.3 9 L5.3 14.8" fill="none" stroke="#6A6A6E" stroke-width="2.2" stroke-linecap="round" stroke-linejoin="round"/></svg>
<svg style="position:absolute;left:622px;top:820px" width="26" height="25" viewBox="0 0 26 25"><path d="M1 3.5 Q1 1.2 3.3 1.2 H8.6 Q9.8 1.2 10.6 2.2 L11.8 3.7 H22.8 Q25 3.7 25 5.9 V21.4 Q25 23.6 22.8 23.6 H3.2 Q1 23.6 1 21.4 Z" fill="url(#fb)"/><path d="M1 7.2 Q1 6.7 1.5 6.7 H24.5 Q25 6.7 25 7.2 V21.4 Q25 23.6 22.8 23.6 H3.2 Q1 23.6 1 21.4 Z" fill="url(#fg)"/></svg>
<div class="rn" style="left:657px;top:819.1px;letter-spacing:0.083px">EverSoloMusic</div>
<div class="rd" style="top:819.1px;letter-spacing:-0.156px">Sep 12, 2025 at 11:03 PM</div>
<div class="rs" style="top:831.8px"></div>
<div class="rk" style="top:819.1px">Folder</div>
<svg style="position:absolute;left:601px;top:856px" width="14" height="18" viewBox="0 0 14 18"><path d="M5.3 3.2 L11.3 9 L5.3 14.8" fill="none" stroke="#6A6A6E" stroke-width="2.2" stroke-linecap="round" stroke-linejoin="round"/></svg>
<svg style="position:absolute;left:622px;top:854px" width="26" height="25" viewBox="0 0 26 25"><path d="M1 3.5 Q1 1.2 3.3 1.2 H8.6 Q9.8 1.2 10.6 2.2 L11.8 3.7 H22.8 Q25 3.7 25 5.9 V21.4 Q25 23.6 22.8 23.6 H3.2 Q1 23.6 1 21.4 Z" fill="url(#fb)"/><path d="M1 7.2 Q1 6.7 1.5 6.7 H24.5 Q25 6.7 25 7.2 V21.4 Q25 23.6 22.8 23.6 H3.2 Q1 23.6 1 21.4 Z" fill="url(#fg)"/></svg>
<div class="rn" style="left:657px;top:852.9px;letter-spacing:0.120px">Movies</div>
<div class="rd" style="top:852.9px;letter-spacing:-0.156px">Sep 12, 2025 at 11:46 PM</div>
<div class="rs" style="top:865.6px"></div>
<div class="rk" style="top:852.9px">Folder</div>
<svg style="position:absolute;left:599px;top:894px" width="18" height="14" viewBox="0 0 18 14"><path d="M3 3.5 L9 9.5 L15 3.5" fill="none" stroke="#6A6A6E" stroke-width="2.2" stroke-linecap="round" stroke-linejoin="round"/></svg>
<svg style="position:absolute;left:622px;top:888px" width="26" height="25" viewBox="0 0 26 25"><path d="M1 3.5 Q1 1.2 3.3 1.2 H8.6 Q9.8 1.2 10.6 2.2 L11.8 3.7 H22.8 Q25 3.7 25 5.9 V21.4 Q25 23.6 22.8 23.6 H3.2 Q1 23.6 1 21.4 Z" fill="url(#fb)"/><path d="M1 7.2 Q1 6.7 1.5 6.7 H24.5 Q25 6.7 25 7.2 V21.4 Q25 23.6 22.8 23.6 H3.2 Q1 23.6 1 21.4 Z" fill="url(#fg)"/></svg>
<div class="rn" style="left:657px;top:886.6px;letter-spacing:0.200px">Music</div>
<div class="rd" style="top:886.6px;letter-spacing:0.105px">Apr 3, 2025 at 1:24 AM</div>
<div class="rs" style="top:899.3px"></div>
<div class="rk" style="top:886.6px">Folder</div>
<svg style="position:absolute;left:601px;top:923px" width="14" height="18" viewBox="0 0 14 18"><path d="M5.3 3.2 L11.3 9 L5.3 14.8" fill="none" stroke="#6A6A6E" stroke-width="2.2" stroke-linecap="round" stroke-linejoin="round"/></svg>
<svg style="position:absolute;left:622px;top:921px" width="26" height="25" viewBox="0 0 26 25"><path d="M1 3.5 Q1 1.2 3.3 1.2 H8.6 Q9.8 1.2 10.6 2.2 L11.8 3.7 H22.8 Q25 3.7 25 5.9 V21.4 Q25 23.6 22.8 23.6 H3.2 Q1 23.6 1 21.4 Z" fill="url(#fb)"/><path d="M1 7.2 Q1 6.7 1.5 6.7 H24.5 Q25 6.7 25 7.2 V21.4 Q25 23.6 22.8 23.6 H3.2 Q1 23.6 1 21.4 Z" fill="url(#fg)"/></svg>
<div class="rn" style="left:657px;top:920.4px;letter-spacing:0.550px">Notifications</div>
<div class="rd" style="top:920.4px;letter-spacing:0.105px">Apr 3, 2025 at 1:24 AM</div>
<div class="rs" style="top:933.1px"></div>
<div class="rk" style="top:920.4px">Folder</div>
<svg style="position:absolute;left:601px;top:957px" width="14" height="18" viewBox="0 0 14 18"><path d="M5.3 3.2 L11.3 9 L5.3 14.8" fill="none" stroke="#6A6A6E" stroke-width="2.2" stroke-linecap="round" stroke-linejoin="round"/></svg>
<svg style="position:absolute;left:622px;top:955px" width="26" height="25" viewBox="0 0 26 25"><path d="M1 3.5 Q1 1.2 3.3 1.2 H8.6 Q9.8 1.2 10.6 2.2 L11.8 3.7 H22.8 Q25 3.7 25 5.9 V21.4 Q25 23.6 22.8 23.6 H3.2 Q1 23.6 1 21.4 Z" fill="url(#fb)"/><path d="M1 7.2 Q1 6.7 1.5 6.7 H24.5 Q25 6.7 25 7.2 V21.4 Q25 23.6 22.8 23.6 H3.2 Q1 23.6 1 21.4 Z" fill="url(#fg)"/></svg>
<div class="rn" style="left:657px;top:954.1px;letter-spacing:0.371px">Pictures</div>
<div class="rd" style="top:954.1px;letter-spacing:-0.050px">Today at 12:29 AM</div>
<div class="rs" style="top:966.8px"></div>
<div class="rk" style="top:954.1px">Folder</div>
<svg style="position:absolute;left:601px;top:991px" width="14" height="18" viewBox="0 0 14 18"><path d="M5.3 3.2 L11.3 9 L5.3 14.8" fill="none" stroke="#6A6A6E" stroke-width="2.2" stroke-linecap="round" stroke-linejoin="round"/></svg>
<svg style="position:absolute;left:622px;top:989px" width="26" height="25" viewBox="0 0 26 25"><path d="M1 3.5 Q1 1.2 3.3 1.2 H8.6 Q9.8 1.2 10.6 2.2 L11.8 3.7 H22.8 Q25 3.7 25 5.9 V21.4 Q25 23.6 22.8 23.6 H3.2 Q1 23.6 1 21.4 Z" fill="url(#fb)"/><path d="M1 7.2 Q1 6.7 1.5 6.7 H24.5 Q25 6.7 25 7.2 V21.4 Q25 23.6 22.8 23.6 H3.2 Q1 23.6 1 21.4 Z" fill="url(#fg)"/></svg>
<div class="rn" style="left:657px;top:987.9px;letter-spacing:0.172px">Podcasts</div>
<div class="rd" style="top:987.9px;letter-spacing:0.105px">Apr 3, 2025 at 1:24 AM</div>
<div class="rs" style="top:1000.6px"></div>
<div class="rk" style="top:987.9px">Folder</div>
</div>
<div id="bot"><div id="botline"></div><div style="position:absolute;left:576px;top:12.5px;width:18px;height:4px;background:#5A6068"></div></div></body></html>
